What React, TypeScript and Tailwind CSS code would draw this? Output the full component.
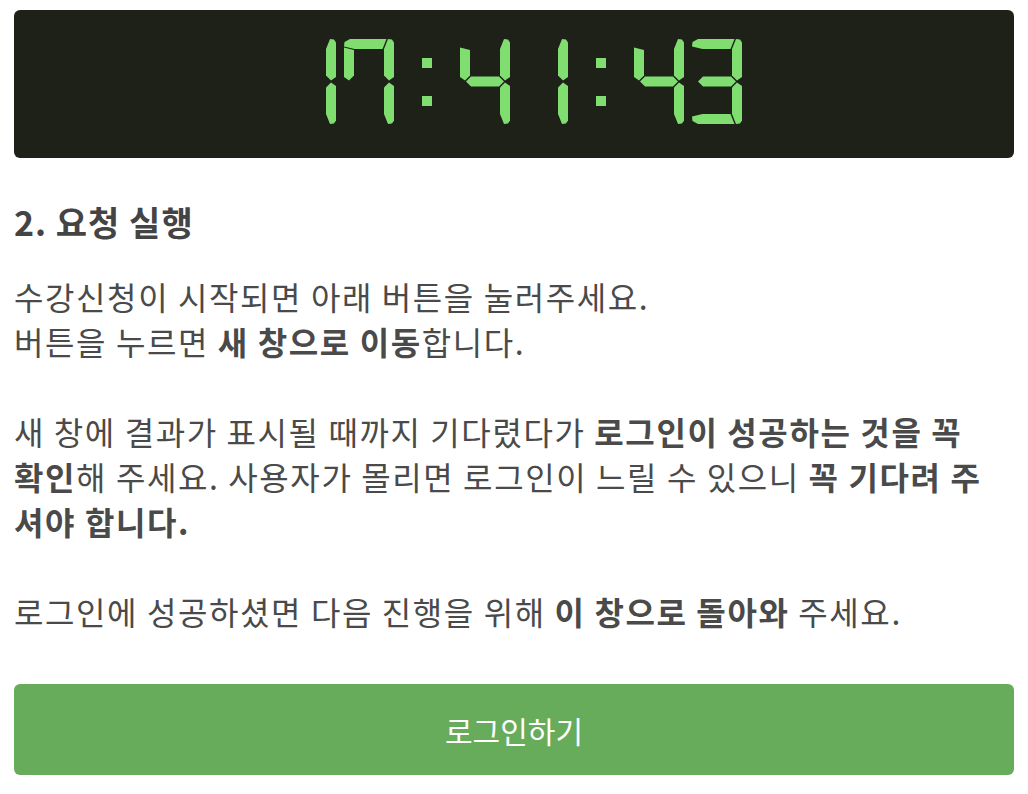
const SEGMENTS: Record<string, string> = {
  a: '6,0 42.5,0 38.5,10 10.5,10 0,7.5 0.5,3',
  b: '44,0 48,0.5 50,3.5 50,38 45,41.5 40,36.5 40,10',
  c: '44,85 48,84.5 50,81.5 50,47 45,43.5 40,48.5 40,75',
  d: '6,85 42.5,85 38.5,75 10.5,75 0,77.5 0.5,82',
  e: '0,76.5 10,74 10,48.5 5,43.5 0,47',
  f: '0,8.5 10,11 10,36.5 5,41.5 0,38',
  g: '6,42.5 11,37.5 39,37.5 44,42.5 39,47.5 11,47.5',
}

// DSEG7 스타일: 7 은 f 세그먼트까지 켜짐
const DIGITS: Record<string, string> = {
  '0': 'abcdef',
  '1': 'bc',
  '2': 'abged',
  '3': 'abgcd',
  '4': 'fgbc',
  '5': 'afgcd',
  '6': 'afgedc',
  '7': 'abcf',
  '8': 'abcdefg',
  '9': 'abcdfg',
}

function Digit({ value }: { value: string }) {
  return (
    <svg width={50} height={85} viewBox="0 0 50 85" aria-hidden="true">
      {DIGITS[value].split('').map((s) => (
        <polygon key={s} points={SEGMENTS[s]} fill="#80de71" />
      ))}
    </svg>
  )
}

function Colon() {
  return (
    <div className="w-[66px] h-[85px] flex flex-col items-center pt-[19px] gap-[28px]" aria-hidden="true">
      <div className="w-[10px] h-[10px] bg-[#80de71]" />
      <div className="w-[10px] h-[10px] bg-[#80de71]" />
    </div>
  )
}

function Clock({ time }: { time: string }) {
  const groups = time.split(':')
  return (
    <div className="h-[148px] rounded-md bg-[#1d2118] flex justify-center items-start pt-[29px]">
      <span className="sr-only">{time}</span>
      {groups.map((g, i) => (
        <div key={i} className="flex">
          {i > 0 && <Colon />}
          <div className="flex gap-2">
            {g.split('').map((d, j) => (
              <Digit key={j} value={d} />
            ))}
          </div>
        </div>
      ))}
    </div>
  )
}

export default function App() {
  return (
    <div className="min-h-screen bg-white px-[14px] pt-[10px] font-['Noto_Sans_CJK_KR','Noto_Sans',sans-serif] text-[#4a4a4a]">
      <Clock time="17:41:43" />

      <h2 className="mt-[44px] text-[34px] leading-[40px] font-bold tracking-[1px] text-[#444]">2. 요청 실행</h2>

      <p className="mt-[32px] pr-[24px] text-[32px] leading-[45px] tracking-[1.6px]">
        수강신청이 시작되면 아래 버튼을 눌러주세요.
        <br />
        버튼을 누르면 <strong className="font-bold">새 창으로 이동</strong>합니다.
        <br />
        <br />
        새 창에 결과가 표시될 때까지 기다렸다가 <strong className="font-bold">로그인이 성공하는 것을 꼭 확인</strong>해
        주세요. 사용자가 몰리면 로그인이 느릴 수 있으니 <strong className="font-bold">꼭 기다려 주셔야 합니다.</strong>
        <br />
        <br />
        로그인에 성공하셨면 다음 진행을 위해 <strong className="font-bold">이 창으로 돌아와</strong> 주세요.
      </p>

      <button
        type="button"
        className="mt-[50px] w-full h-[91px] rounded-md bg-[#67ac5b] text-white text-[30px] leading-none"
      >
        로그인하기
      </button>
    </div>
  )
}
